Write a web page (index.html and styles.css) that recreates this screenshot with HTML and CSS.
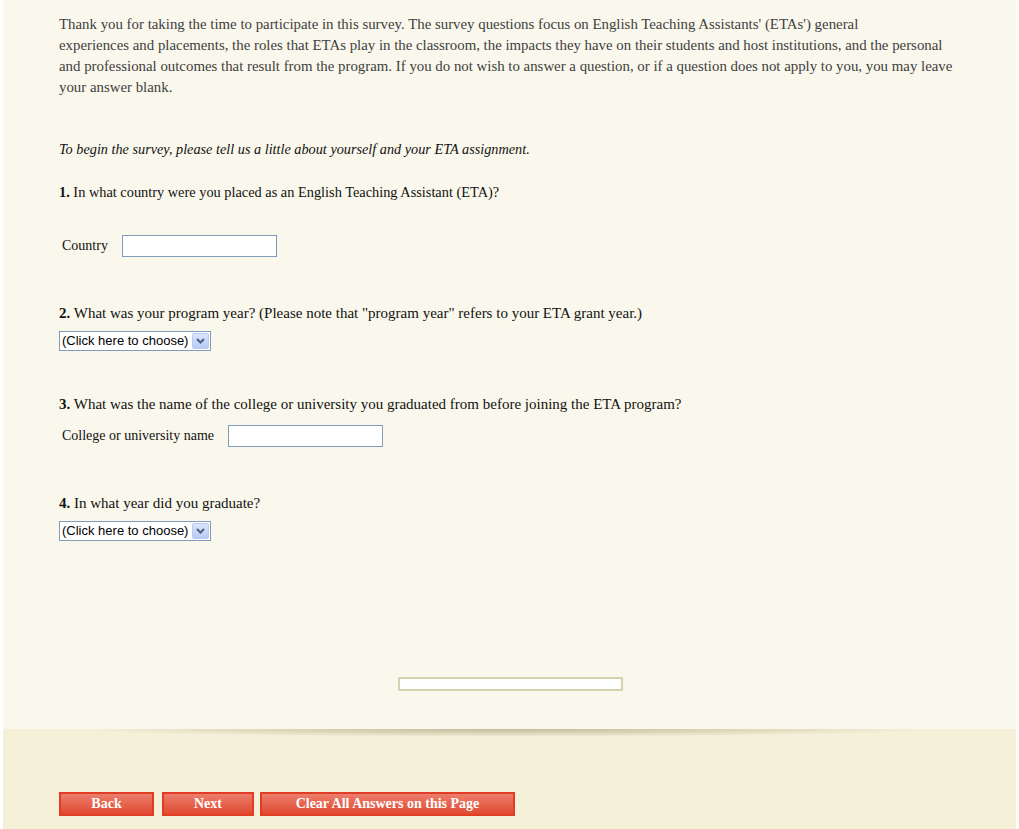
FILE: index.html
```html
<!DOCTYPE html>
<html>
<head>
<meta charset="utf-8">
<link rel="stylesheet" href="styles.css">
</head>
<body>
<div class="page">
  <div class="content">
    <p class="intro">Thank you for taking the time to participate in this survey. The survey questions focus on English Teaching Assistants' (ETAs') general<br>experiences and placements, the roles that ETAs play in the classroom, the impacts they have on their students and host institutions, and the personal<br>and professional outcomes that result from the program. If you do not wish to answer a question, or if a question does not apply to you, you may leave<br>your answer blank.</p>

    <p class="lead">To begin the survey, please tell us a little about yourself and your ETA assignment.</p>

    <div class="q q1"><b>1.</b> In what country were you placed as an English Teaching Assistant (ETA)?</div>
    <div class="field f1"><span class="label">Country</span><span class="input"></span></div>

    <div class="q q2"><b>2.</b> What was your program year? (Please note that "program year" refers to your ETA grant year.)</div>
    <div class="select s1"><span class="sel-text">(Click here to choose)</span><span class="sel-btn"><svg width="9" height="6" viewBox="0 0 9 6"><path d="M1 1 L4.5 4.5 L8 1" fill="none" stroke="#4d6185" stroke-width="2"/></svg></span></div>

    <div class="q q3"><b>3.</b> What was the name of the college or university you graduated from before joining the ETA program?</div>
    <div class="field f3"><span class="label">College or university name</span><span class="input"></span></div>

    <div class="q q4"><b>4.</b> In what year did you graduate?</div>
    <div class="select s2"><span class="sel-text">(Click here to choose)</span><span class="sel-btn"><svg width="9" height="6" viewBox="0 0 9 6"><path d="M1 1 L4.5 4.5 L8 1" fill="none" stroke="#4d6185" stroke-width="2"/></svg></span></div>

    <div class="progress-row"><div class="progress"></div></div>
  </div>
  <div class="footer">
    <div class="shadow"></div>
    <div class="buttons">
      <button class="btn b-back">Back</button>
      <button class="btn b-next">Next</button>
      <button class="btn b-clear">Clear All Answers on this Page</button>
    </div>
  </div>
</div>
</body>
</html>
```
FILE: styles.css
```css
html, body {
  margin: 0;
  padding: 0;
  background: #ffffff;
}
.page {
  margin: 0 3px;
  font-family: "Liberation Serif", "Times New Roman", serif;
}
.content {
  background: #faf8ec;
  height: 729px;
  box-sizing: border-box;
  padding: 14px 56px 0 56px;
  overflow: hidden;
}
.intro {
  margin: 0;
  font-size: 14.85px;
  line-height: 21px;
  color: #404040;
}
.lead {
  margin: 42px 0 0 0;
  font-size: 14.25px;
  line-height: 18px;
  font-style: italic;
  color: #111;
}
.q {
  font-size: 15px;
  line-height: 20px;
  color: #111;
}
.q b { font-weight: bold; }
.q1 { margin-top: 24px; font-size: 14.35px; }
.field {
  display: flex;
  align-items: center;
  font-size: 14px;
  color: #111;
  height: 22px;
}
.field .label {
  padding-left: 3px;
  margin-right: 14px;
}
.field .input {
  display: block;
  width: 153px;
  height: 20px;
  background: #fff;
  border: 1px solid #7f9db9;
}
.f1 { margin-top: 33px; }
.f3 { margin-top: 11px; }
.q2 { margin-top: 46px; }
.q3 { margin-top: 43px; }
.q4 { margin-top: 46px; }
.select {
  display: flex;
  align-items: center;
  width: 150px;
  height: 18px;
  border: 1px solid #7f9db9;
  background: #fff;
  font-family: "Liberation Sans", Arial, sans-serif;
  font-size: 13px;
  color: #000;
}
.s1, .s2 { margin-top: 8px; }
.sel-text {
  flex: 1;
  padding-left: 2px;
  line-height: 18px;
  white-space: nowrap;
}
.sel-btn {
  width: 15px;
  height: 14px;
  margin-right: 1px;
  border: 1px solid #b9c9ef;
  border-radius: 2px;
  background: linear-gradient(#dbe4fb, #b8cbf5);
  display: flex;
  align-items: center;
  justify-content: center;
}
.progress-row {
  margin-top: 136px;
  display: flex;
  justify-content: center;
}
.progress {
  width: 221px;
  height: 10px;
  border: 2px solid #d6d2b0;
  background: #fff;
  margin-left: 2px;
}
.footer {
  background: #f5f0d8;
  height: 100px;
}
.shadow {
  height: 8px;
  margin: 0 80px 0 70px;
  background: radial-gradient(ellipse 50% 100% at 50% 0%, rgba(160,150,110,0.6), rgba(160,150,110,0.25) 60%, rgba(160,150,110,0) 100%);
}
.buttons {
  display: flex;
  padding: 55px 0 0 56px;
}
.btn {
  height: 24px;
  box-sizing: border-box;
  border: 2px solid #e03d24;
  background: linear-gradient(#ec7d6c, #e04a30);
  color: #fff;
  font-family: "Liberation Serif", "Times New Roman", serif;
  font-weight: bold;
  font-size: 14px;
  line-height: 18px;
  padding: 0;
  margin: 0;
}
.b-back { width: 95px; margin-right: 8px; }
.b-next { width: 92px; margin-right: 6px; }
.b-clear { width: 255px; }
```
